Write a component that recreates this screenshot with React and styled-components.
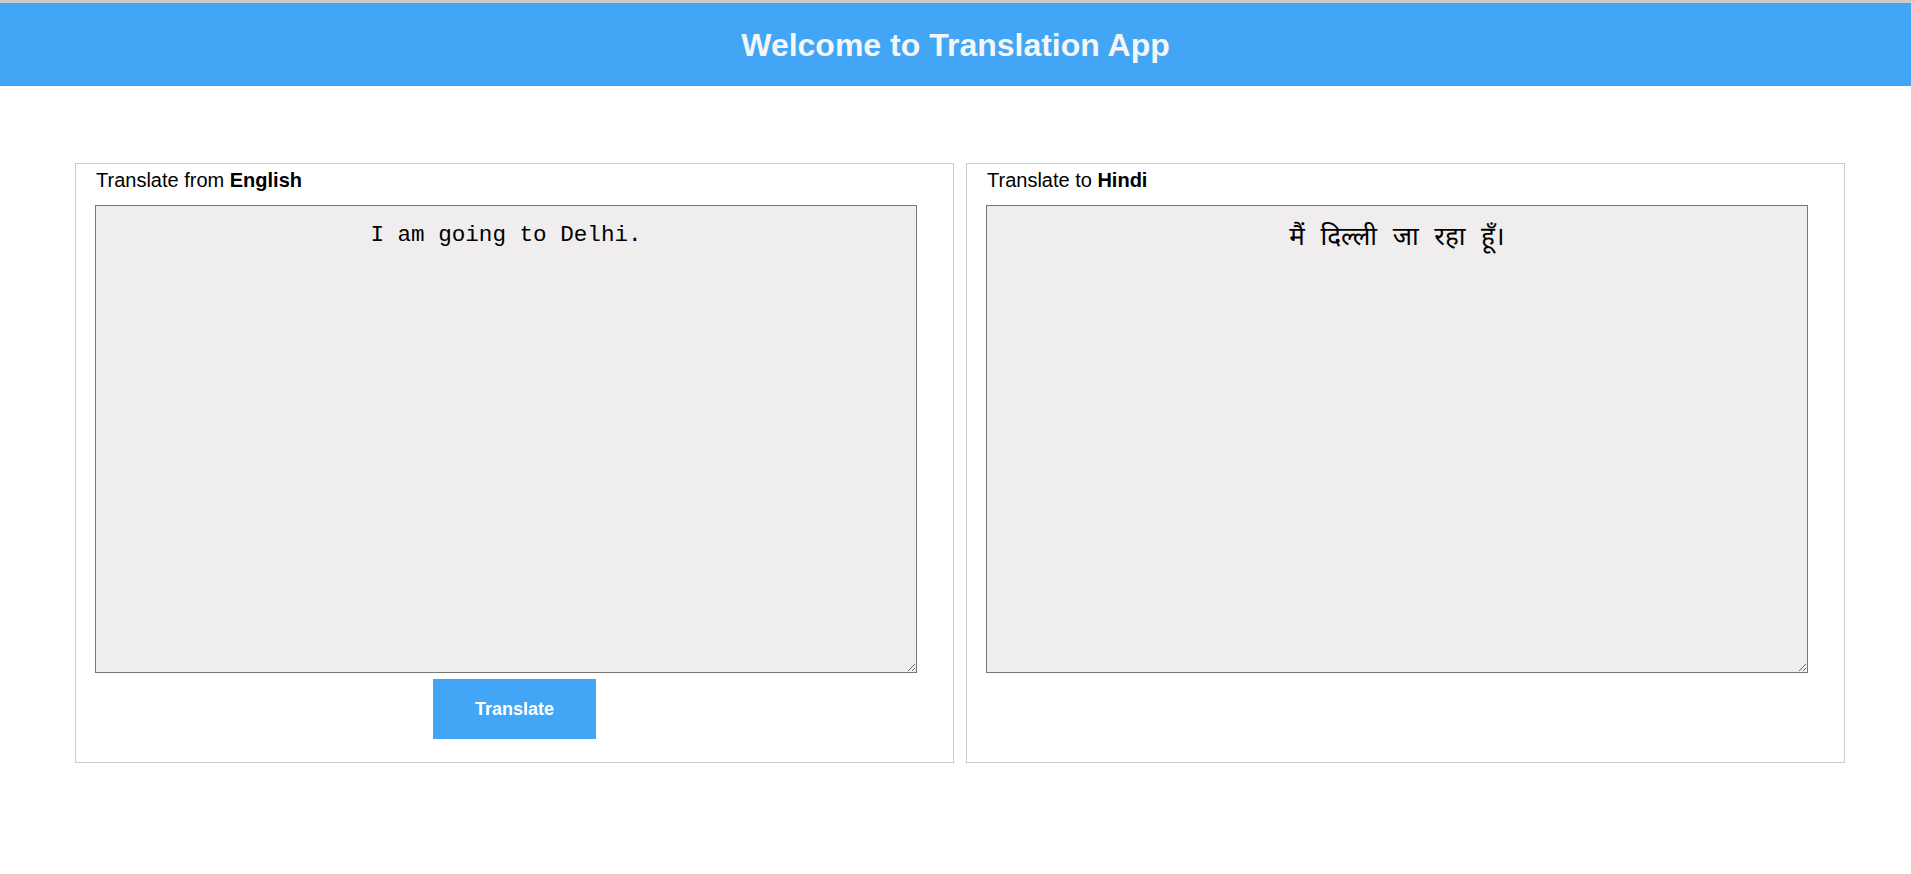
import { useState } from 'react';
import styled, { createGlobalStyle } from 'styled-components';

const GlobalStyle = createGlobalStyle`
  body {
    margin: 0;
    font-family: Arial, "Liberation Sans", sans-serif;
    background: #ffffff;
    color: #000000;
  }
`;

const Header = styled.header`
  height: 83px;
  border-top: 3px solid #cccccc;
  background: #42a5f5;
  display: flex;
  align-items: center;
  justify-content: center;
`;

const Title = styled.h1`
  margin: 2px 0 0;
  font-size: 32px;
  font-weight: 700;
  color: #f5f5f5;
`;

const Main = styled.main`
  display: flex;
  gap: 12px;
  padding: 77px 0 0 75px;
`;

const Panel = styled.section`
  box-sizing: border-box;
  width: 879px;
  height: 600px;
  border: 1px solid #cccccc;
  display: flex;
  flex-direction: column;
`;

const Label = styled.p`
  margin: 5px 0 13px 20px;
  font-size: 20px;
`;

const TextBox = styled.textarea`
  box-sizing: border-box;
  width: 822px;
  height: 468px;
  margin-left: 19px;
  padding: 16px 10px;
  border: 1px solid #767676;
  background: #efeded;
  font-family: Consolas, "Liberation Mono", "Noto Sans Devanagari", monospace;
  font-size: ${({ $size }) => $size || 22.6}px;
  text-align: center;
  color: #000000;
  outline: none;
`;

const Button = styled.button`
  align-self: center;
  width: 163px;
  height: 60px;
  margin-top: 6px;
  border: none;
  background: #42a5f5;
  color: #ffffff;
  font-family: Arial, "Liberation Sans", sans-serif;
  font-size: 18px;
  font-weight: 700;
  cursor: pointer;
`;

const App = () => {
  const [source, setSource] = useState('I am going to Delhi.');
  const [target, setTarget] = useState('मैं दिल्ली जा रहा हूँ।');

  return (
    <>
      <GlobalStyle />
      <Header>
        <Title>Welcome to Translation App</Title>
      </Header>
      <Main>
        <Panel>
          <Label>
            Translate from <b>English</b>
          </Label>
          <TextBox value={source} onChange={(e) => setSource(e.target.value)} />
          <Button onClick={() => setTarget(target)}>Translate</Button>
        </Panel>
        <Panel>
          <Label>
            Translate to <b>Hindi</b>
          </Label>
          <TextBox
            $size={26}
            value={target}
            onChange={(e) => setTarget(e.target.value)}
          />
        </Panel>
      </Main>
    </>
  );
};

export default App;
